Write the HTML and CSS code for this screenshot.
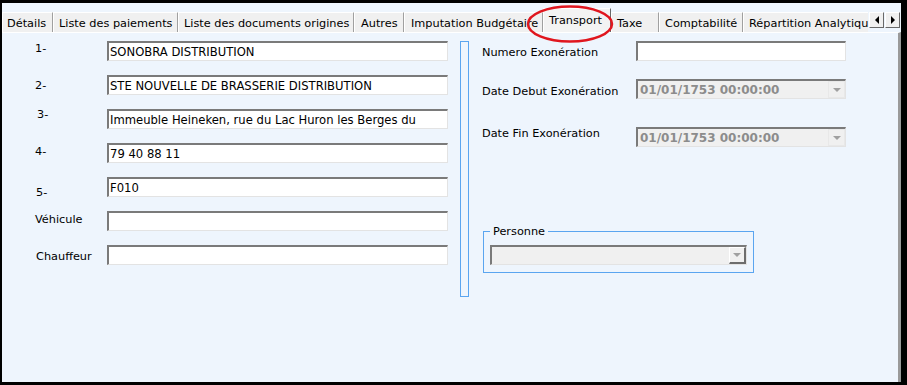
FILE: index.html
```html
<!DOCTYPE html>
<html lang="fr">

<head>
    <meta charset="UTF-8">
    <meta name="viewport" content="width=device-width, initial-scale=1.0">
    <title>Transport</title>
    <link rel="stylesheet" href="styles.css">
</head>

<body>
    <div class="Fenetre">
        <div class="Onglets">
            <div class="Onglet o1">Détails</div>
            <div class="Onglet o2">Liste des paiements</div>
            <div class="Onglet o3">Liste des documents origines</div>
            <div class="Onglet o4">Autres</div>
            <div class="Onglet o5">Imputation Budgétaire</div>
            <div class="Onglet Actif o6">Transport</div>
            <div class="Onglet o7">Taxe</div>
            <div class="Onglet o8">Comptabilité</div>
            <div class="Onglet o9">Répartition Analytiqu</div>
            <div class="Defil">
                <button class="DefilBtn"><span class="FlecheG"></span></button>
                <button class="DefilBtn"><span class="FlecheD"></span></button>
            </div>
        </div>

        <div class="Panneau">
            <div class="ColGauche">
                <div class="Ligne">
                    <label class="Lbl l1">1-</label>
                    <input class="Champ" type="text" value="SONOBRA DISTRIBUTION">
                </div>
                <div class="Ligne">
                    <label class="Lbl l2">2-</label>
                    <input class="Champ" type="text" value="STE NOUVELLE DE BRASSERIE DISTRIBUTION">
                </div>
                <div class="Ligne">
                    <label class="Lbl l3">3-</label>
                    <input class="Champ" type="text" value="Immeuble Heineken, rue du Lac Huron les Berges du">
                </div>
                <div class="Ligne">
                    <label class="Lbl l4">4-</label>
                    <input class="Champ" type="text" value="79 40 88 11">
                </div>
                <div class="Ligne">
                    <label class="Lbl l5">5-</label>
                    <input class="Champ" type="text" value="F010">
                </div>
                <div class="Ligne">
                    <label class="Lbl l6">Véhicule</label>
                    <input class="Champ" type="text" value="">
                </div>
                <div class="Ligne">
                    <label class="Lbl l7">Chauffeur</label>
                    <input class="Champ" type="text" value="">
                </div>
            </div>

            <div class="Separateur"></div>

            <div class="ColDroite">
                <div class="LigneD">
                    <label class="LblD d1">Numero Exonération</label>
                    <input class="Champ ChampD" type="text" value="">
                </div>
                <div class="LigneD r2">
                    <label class="LblD d2">Date Debut Exonération</label>
                    <div class="Combo Inactif">
                        <span class="ComboTxt">01/01/1753 00:00:00</span>
                        <span class="ComboBtn"><span class="FlecheB"></span></span>
                    </div>
                </div>
                <div class="LigneD r3">
                    <label class="LblD d3">Date Fin Exonération</label>
                    <div class="Combo Inactif">
                        <span class="ComboTxt">01/01/1753 00:00:00</span>
                        <span class="ComboBtn"><span class="FlecheB"></span></span>
                    </div>
                </div>
                <fieldset class="Groupe">
                    <legend>Personne</legend>
                    <div class="Combo ComboP">
                        <span class="ComboTxt"></span>
                        <span class="ComboBtn Releve"><span class="FlecheB"></span></span>
                    </div>
                </fieldset>
            </div>
        </div>

        <svg class="Cercle" width="88" height="40" viewBox="0 0 88 40">
            <ellipse cx="44" cy="20" rx="42" ry="17.5" fill="none" stroke="#e0161e" stroke-width="2.5" />
        </svg>
    </div>
</body>

</html>
```

FILE: styles.css
```css
body {
    margin: 0;
    font-family: "DejaVu Sans", Verdana, sans-serif;
    font-size: 11.3px;
    line-height: 13px;
    color: #000;
}

.Fenetre {
    width: 907px;
    height: 385px;
    box-sizing: border-box;
    border: solid #000;
    border-width: 3px 6px 3px 2px;
    background-color: #eef5fd;
    position: relative;
    display: flex;
    flex-direction: column;
}

/* barre d'onglets */
.Onglets {
    height: 29px;
    display: flex;
    align-items: flex-end;
    padding-right: 2px;
    flex-shrink: 0;
}

.Onglet {
    height: 20px;
    box-sizing: border-box;
    background-color: #f0f0f0;
    border-top: 1px solid #fff;
    border-left: 1px solid #fff;
    border-right: 1px solid #a0a0a0;
    padding: 4px 0 0 5px;
    white-space: nowrap;
    overflow: hidden;
    flex-shrink: 0;
}

.Onglet.Actif {
    height: 24px;
    padding-top: 5px;
    border-right-color: #696969;
    background-color: #f3f3f3;
}

.o1 { width: 51px; padding-left: 4px; }
.o2 { width: 125px; }
.o3 { width: 176px; }
.o4 { width: 50px; padding-left: 6px; }
.o5 { width: 139px; padding-left: 6px; }
.o6 { width: 68px; padding-left: 5px; }
.o7 { width: 48px; padding-left: 5px; }
.o8 { width: 84px; }
.o9 { width: 125px; border-right: none; }

.Defil {
    display: flex;
    align-self: flex-start;
    margin-top: 9px;
}

.DefilBtn {
    width: 15px;
    height: 16px;
    padding: 0;
    margin: 0 0 0 1px;
    background-color: #f0f0f0;
    border: 1px solid;
    border-color: #fff #696969 #696969 #fff;
    display: flex;
    align-items: center;
    justify-content: center;
}

.FlecheG {
    width: 0;
    height: 0;
    border-top: 4px solid transparent;
    border-bottom: 4px solid transparent;
    border-right: 4px solid #000;
}

.FlecheD {
    width: 0;
    height: 0;
    border-top: 4px solid transparent;
    border-bottom: 4px solid transparent;
    border-left: 4px solid #000;
}

/* panneau */
.Panneau {
    flex: 1;
    border-top: 1px solid #fff;
    border-right: 3px solid #9a9a9a;
    padding: 8px 0 0 33px;
    display: flex;
    align-items: flex-start;
}

.ColGauche {
    display: flex;
    flex-direction: column;
    gap: 14px;
}

.Ligne {
    display: flex;
    height: 20px;
}

.Lbl {
    width: 72px;
    flex-shrink: 0;
}

.l1 { padding-top: 1px; }
.l2 { padding-top: 4px; }
.l3 { margin-top: -1px; padding-left: 2px; width: 70px; }
.l4 { padding-top: 2px; }
.l5 { padding-top: 9px; padding-left: 1px; width: 71px; }
.l6 { padding-top: 2px; }
.l7 { padding-top: 5px; padding-left: 1px; width: 71px; }

.Champ {
    width: 341px;
    height: 20px;
    box-sizing: border-box;
    margin: 0;
    padding: 0 0 0 1px;
    border-style: solid;
    border-width: 2px 1px 1px 2px;
    border-color: #7a7a7a #e3e3e3 #e3e3e3 #7a7a7a;
    background-color: #fff;
    font-family: "DejaVu Sans", Verdana, sans-serif;
    font-size: 11.6px;
    color: #000;
    outline: none;
}

.Separateur {
    width: 9px;
    height: 256px;
    box-sizing: border-box;
    border: 1px solid #5aa5f0;
    margin-left: 12px;
    flex-shrink: 0;
}

.ColDroite {
    margin-left: 13px;
    display: flex;
    flex-direction: column;
}

.LigneD {
    display: flex;
    height: 20px;
}

.LigneD.r2 { margin-top: 18px; }
.LigneD.r3 { margin-top: 28px; }

.LblD {
    width: 154px;
    flex-shrink: 0;
}

.d1 { padding-top: 5px; }
.d2 { padding-top: 6px; }
.d3 { padding-top: 0; }

.ChampD {
    width: 210px;
}

/* listes déroulantes */
.Combo {
    width: 210px;
    height: 20px;
    box-sizing: border-box;
    border-style: solid;
    border-width: 2px 1px 1px 2px;
    border-color: #7a7a7a #e3e3e3 #e3e3e3 #7a7a7a;
    background-color: #f0f0f0;
    display: flex;
    align-items: stretch;
}

.ComboTxt {
    flex: 1;
    padding: 2px 0 0 2px;
    font-weight: bold;
    font-size: 12px;
    line-height: 14px;
    color: #8c8c8c;
    white-space: nowrap;
}

.ComboBtn {
    width: 17px;
    box-sizing: border-box;
    border: 1px solid #e8e8e8;
    background-color: #f0f0f0;
    display: flex;
    align-items: center;
    justify-content: center;
}

.ComboBtn.Releve {
    border-width: 1px 2px 2px 1px;
    border-color: #fff #6d6d6d #6d6d6d #fff;
}

.FlecheB {
    width: 0;
    height: 0;
    border-left: 4px solid transparent;
    border-right: 4px solid transparent;
    border-top: 4px solid #a0a0a0;
}

.Groupe {
    margin: 78px 0 0 1px;
    padding: 7px 6px 7px 6px;
    width: 271px;
    box-sizing: border-box;
    border: 1px solid #5aa5f0;
    min-width: 0;
}

.Groupe legend {
    padding: 0 3px;
}

.ComboP {
    width: 257px;
}

/* annotation */
.Cercle {
    position: absolute;
    left: 524px;
    top: 1px;
}
```
